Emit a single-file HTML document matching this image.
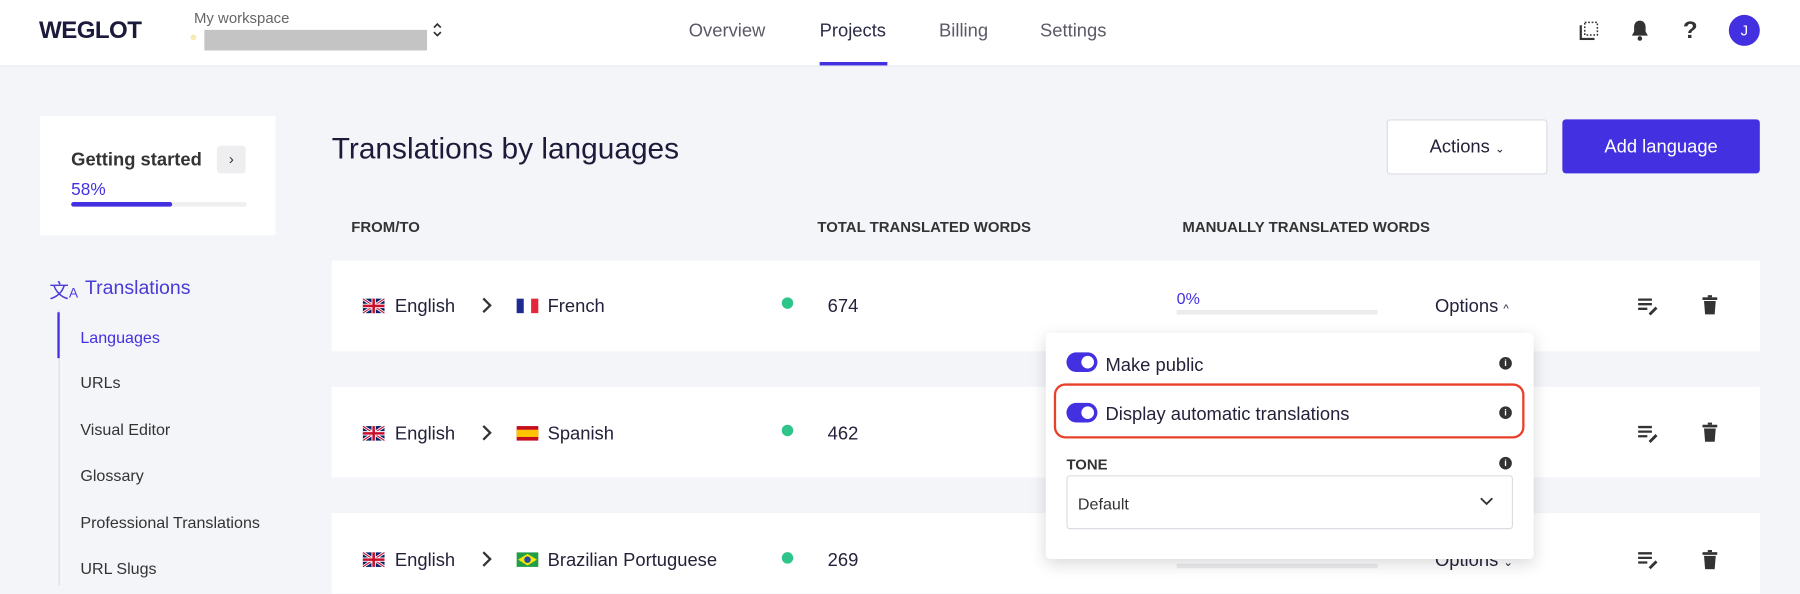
<!DOCTYPE html>
<html><head><meta charset="utf-8">
<style>
html,body{margin:0;padding:0;width:1800px;height:584px;overflow:hidden;background:#f3f5f9;}
#s{position:absolute;left:0;top:0;width:1568px;height:509px;transform:scale(1.147959);transform-origin:0 0;font-family:"Liberation Sans",sans-serif;color:#23223a;}
.a{position:absolute;white-space:nowrap;}
.hdr{left:0;top:0;width:1568px;height:57px;background:#fff;border-bottom:1px solid #e6e8ee;}
.nav{font-size:16px;color:#5a5a66;top:17px;}
.row{left:289px;width:1244px;height:79px;background:#fff;}
.txt{font-size:16px;color:#23223a;}
.col{font-size:13px;font-weight:bold;color:#333;top:188px;}
.flag{width:19px;height:13px;}
.side{font-size:14px;color:#333;left:70px;}
.txt,.nav,.side,.col,.m2{margin-top:2px;}
.dot{width:10px;height:10px;border-radius:50%;background:#2ec48a;}
.tog{width:27px;height:17px;border-radius:9px;background:#4330e0;}
.tog::after{content:"";position:absolute;right:3px;top:3px;width:11px;height:11px;border-radius:50%;background:#fff;}
.info{width:11px;height:11px;border-radius:50%;background:#333;color:#fff;font-size:8px;font-weight:bold;text-align:center;line-height:11px;}
</style></head><body>
<div id="s">
<div class="a hdr"></div>
<div class="a" style="left:34px;top:15px;font-size:21px;font-weight:900;color:#1b1a3a;letter-spacing:-0.5px;">WEGLOT</div>
<div class="a" style="left:169px;top:8px;font-size:13px;color:#666;">My workspace</div>
<div class="a" style="left:166px;top:30px;width:5px;height:5px;border-radius:50%;background:#f4ecb0;"></div>
<div class="a" style="left:178px;top:26px;width:194px;height:18px;background:#c4c4c4;"></div>
<svg class="a" style="left:376px;top:18px" width="10" height="16" viewBox="0 0 10 16"><path d="M2 6l3-3 3 3M2 10l3 3 3-3" stroke="#333" stroke-width="1.5" fill="none"/></svg>
<div class="a nav" style="left:600px;">Overview</div>
<div class="a nav" style="left:714px;color:#2b2b45;">Projects</div>
<div class="a" style="left:714px;top:54px;width:59px;height:3px;background:#4330e0;"></div>
<div class="a nav" style="left:818px;">Billing</div>
<div class="a nav" style="left:906px;">Settings</div>
<svg class="a" style="left:1376px;top:18px" width="17" height="17" viewBox="0 0 17 17"><path d="M1 4v12h12" stroke="#333" stroke-width="2" fill="none"/><rect x="4.5" y="1.5" width="11" height="11" stroke="#333" stroke-width="1.3" stroke-dasharray="1.5 1.5" fill="none"/></svg>
<svg class="a" style="left:1420px;top:17px" width="17" height="20" viewBox="0 0 17 20"><path d="M8.5 1c-3 0-5 2.3-5 5.5v4L1.5 14h14l-2-3.5v-4C13.5 3.3 11.5 1 8.5 1z" fill="#333"/><circle cx="8.5" cy="16.5" r="2" fill="#333"/></svg>
<div class="a" style="left:1466px;top:15px;font-size:21px;font-weight:bold;color:#333;">?</div>
<div class="a" style="left:1506px;top:13px;width:27px;height:27px;border-radius:50%;background:#4330e0;color:#fff;font-size:13px;text-align:center;line-height:27px;">J</div>

<div class="a" style="left:35px;top:101px;width:205px;height:104px;background:#fff;"></div>
<div class="a m2" style="left:62px;top:129px;font-size:16px;font-weight:bold;color:#333;">Getting started</div>
<div class="a" style="left:189px;top:127px;width:25px;height:24px;border-radius:3px;background:#eeeef0;font-size:13px;text-align:center;line-height:24px;color:#333;">›</div>
<div class="a m2" style="left:62px;top:155px;font-size:15px;color:#4330e0;">58%</div>
<div class="a" style="left:62px;top:176px;width:153px;height:4px;border-radius:2px;background:#efefef;"></div>
<div class="a" style="left:62px;top:176px;width:88px;height:4px;border-radius:2px;background:#4330e0;"></div>

<div class="a m2" style="left:43px;top:237px;font-size:17px;color:#4a3ad6;">文<span style="font-size:12px">A</span></div>
<div class="a m2" style="left:74px;top:239px;font-size:17px;color:#4a3ad6;">Translations</div>
<div class="a" style="left:51px;top:270px;width:1px;height:240px;background:#dcdde3;"></div>
<div class="a" style="left:50px;top:272px;width:2px;height:40px;background:#4330e0;"></div>
<div class="a side" style="top:284px;color:#4330e0;">Languages</div>
<div class="a side" style="top:323px;">URLs</div>
<div class="a side" style="top:364px;">Visual Editor</div>
<div class="a side" style="top:404px;">Glossary</div>
<div class="a side" style="top:445px;">Professional Translations</div>
<div class="a side" style="top:485px;">URL Slugs</div>

<div class="a m2" style="left:289px;top:112px;font-size:26px;color:#1c1b3a;">Translations by languages</div>
<div class="a" style="left:1208px;top:104px;width:138px;height:46px;background:#fff;border:1px solid #dcdde3;border-radius:3px;font-size:16px;text-align:center;line-height:48px;color:#23223a;">Actions <span style="font-size:10px">⌄</span></div>
<div class="a" style="left:1361px;top:104px;width:172px;height:47px;background:#4330e0;border-radius:3px;font-size:16px;text-align:center;line-height:49px;color:#fff;">Add language</div>

<div class="a col" style="left:306px;">FROM/TO</div>
<div class="a col" style="left:712px;">TOTAL TRANSLATED WORDS</div>
<div class="a col" style="left:1030px;">MANUALLY TRANSLATED WORDS</div>

<div class="a row" style="top:227px;"></div>
<div class="a row" style="top:337px;"></div>
<div class="a row" style="top:447px;height:70px;"></div>

<svg class="a flag" style="left:316px;top:260px" viewBox="0 0 60 40"><rect width="60" height="40" fill="#012169"/><path d="M0 0L60 40M60 0L0 40" stroke="#fff" stroke-width="8"/><path d="M0 0L60 40M60 0L0 40" stroke="#c8102e" stroke-width="3"/><path d="M30 0v40M0 20h60" stroke="#fff" stroke-width="12"/><path d="M30 0v40M0 20h60" stroke="#c8102e" stroke-width="7"/></svg>
<div class="a txt" style="left:344px;top:257px;">English</div>
<svg class="a" style="left:419px;top:259px" width="10" height="14" viewBox="0 0 10 14"><path d="M2 1l6 6-6 6" stroke="#333" stroke-width="2" fill="none"/></svg>
<svg class="a flag" style="left:450px;top:260px" viewBox="0 0 3 2"><rect width="1" height="2" fill="#1d2a8f"/><rect x="1" width="1" height="2" fill="#fff"/><rect x="2" width="1" height="2" fill="#e4263a"/></svg>
<div class="a txt" style="left:477px;top:257px;">French</div>
<div class="a dot" style="left:681px;top:259px;"></div>
<div class="a txt" style="left:721px;top:257px;">674</div>
<div class="a m2" style="left:1025px;top:250px;font-size:14px;color:#4330e0;">0%</div>
<div class="a" style="left:1025px;top:270px;width:175px;height:4px;background:#ececef;"></div>
<div class="a txt" style="left:1250px;top:257px;">Options <span style="font-size:10px">^</span></div>

<svg class="a" style="left:1426px;top:258px" width="20" height="18" viewBox="0 0 20 18"><path d="M1 3h12M1 7h12M1 11h8" stroke="#333" stroke-width="2"/><path d="M11 16l6-6" stroke="#333" stroke-width="2.5"/></svg>
<svg class="a" style="left:1426px;top:369px" width="20" height="18" viewBox="0 0 20 18"><path d="M1 3h12M1 7h12M1 11h8" stroke="#333" stroke-width="2"/><path d="M11 16l6-6" stroke="#333" stroke-width="2.5"/></svg>
<svg class="a" style="left:1426px;top:479px" width="20" height="18" viewBox="0 0 20 18"><path d="M1 3h12M1 7h12M1 11h8" stroke="#333" stroke-width="2"/><path d="M11 16l6-6" stroke="#333" stroke-width="2.5"/></svg>
<svg class="a" style="left:1483px;top:257px" width="13" height="17" viewBox="0 0 14 18"><rect x="0" y="2" width="14" height="2.5" fill="#333"/><rect x="5" y="0" width="4" height="2" fill="#333"/><path d="M1.5 5.5h11l-1 12.5h-9z" fill="#333"/></svg>
<svg class="a" style="left:1483px;top:368px" width="13" height="17" viewBox="0 0 14 18"><rect x="0" y="2" width="14" height="2.5" fill="#333"/><rect x="5" y="0" width="4" height="2" fill="#333"/><path d="M1.5 5.5h11l-1 12.5h-9z" fill="#333"/></svg>
<svg class="a" style="left:1483px;top:479px" width="13" height="17" viewBox="0 0 14 18"><rect x="0" y="2" width="14" height="2.5" fill="#333"/><rect x="5" y="0" width="4" height="2" fill="#333"/><path d="M1.5 5.5h11l-1 12.5h-9z" fill="#333"/></svg>

<svg class="a flag" style="left:316px;top:371px" viewBox="0 0 60 40"><rect width="60" height="40" fill="#012169"/><path d="M0 0L60 40M60 0L0 40" stroke="#fff" stroke-width="8"/><path d="M0 0L60 40M60 0L0 40" stroke="#c8102e" stroke-width="3"/><path d="M30 0v40M0 20h60" stroke="#fff" stroke-width="12"/><path d="M30 0v40M0 20h60" stroke="#c8102e" stroke-width="7"/></svg>
<div class="a txt" style="left:344px;top:368px;">English</div>
<svg class="a" style="left:419px;top:370px" width="10" height="14" viewBox="0 0 10 14"><path d="M2 1l6 6-6 6" stroke="#333" stroke-width="2" fill="none"/></svg>
<svg class="a flag" style="left:450px;top:371px" viewBox="0 0 3 2"><rect width="3" height="2" fill="#c60b1e"/><rect y="0.5" width="3" height="1" fill="#ffc400"/></svg>
<div class="a txt" style="left:477px;top:368px;">Spanish</div>
<div class="a dot" style="left:681px;top:370px;"></div>
<div class="a txt" style="left:721px;top:368px;">462</div>

<svg class="a flag" style="left:316px;top:481px" viewBox="0 0 60 40"><rect width="60" height="40" fill="#012169"/><path d="M0 0L60 40M60 0L0 40" stroke="#fff" stroke-width="8"/><path d="M0 0L60 40M60 0L0 40" stroke="#c8102e" stroke-width="3"/><path d="M30 0v40M0 20h60" stroke="#fff" stroke-width="12"/><path d="M30 0v40M0 20h60" stroke="#c8102e" stroke-width="7"/></svg>
<div class="a txt" style="left:344px;top:478px;">English</div>
<svg class="a" style="left:419px;top:480px" width="10" height="14" viewBox="0 0 10 14"><path d="M2 1l6 6-6 6" stroke="#333" stroke-width="2" fill="none"/></svg>
<svg class="a flag" style="left:450px;top:481px" viewBox="0 0 30 20"><rect width="30" height="20" fill="#229e45"/><path d="M15 2L28 10 15 18 2 10z" fill="#f8e509"/><circle cx="15" cy="10" r="4.5" fill="#2b49a3"/></svg>
<div class="a txt" style="left:477px;top:478px;">Brazilian Portuguese</div>
<div class="a dot" style="left:681px;top:481px;"></div>
<div class="a txt" style="left:721px;top:478px;">269</div>
<div class="a" style="left:1025px;top:491px;width:175px;height:4px;background:#ececef;"></div>
<div class="a txt" style="left:1250px;top:478px;">Options <span style="font-size:10px">⌄</span></div>

<div class="a" style="left:911px;top:290px;width:425px;height:197px;background:#fff;border-radius:4px;box-shadow:0 4px 14px rgba(0,0,0,0.15);"></div>
<div class="a tog" style="left:929px;top:307px;"></div>
<div class="a txt" style="left:963px;top:308px;">Make public</div>
<div class="a info" style="left:1306px;top:311px;">i</div>
<div class="a" style="left:918px;top:334px;width:406px;height:44px;border:2px solid #e8402a;border-radius:10px;"></div>
<div class="a tog" style="left:929px;top:351px;"></div>
<div class="a txt" style="left:963px;top:351px;">Display automatic translations</div>
<div class="a info" style="left:1306px;top:354px;">i</div>
<div class="a m2" style="left:929px;top:395px;font-size:13px;font-weight:bold;color:#333;">TONE</div>
<div class="a info" style="left:1306px;top:398px;">i</div>
<div class="a" style="left:929px;top:414px;width:387px;height:45px;border:1px solid #dcdde3;border-radius:3px;background:#fff;"></div>
<div class="a m2" style="left:939px;top:429px;font-size:14px;color:#333;">Default</div>
<svg class="a" style="left:1289px;top:433px" width="12" height="8" viewBox="0 0 12 8"><path d="M1 1l5 5 5-5" stroke="#333" stroke-width="1.6" fill="none"/></svg>
</div>
</body></html>
